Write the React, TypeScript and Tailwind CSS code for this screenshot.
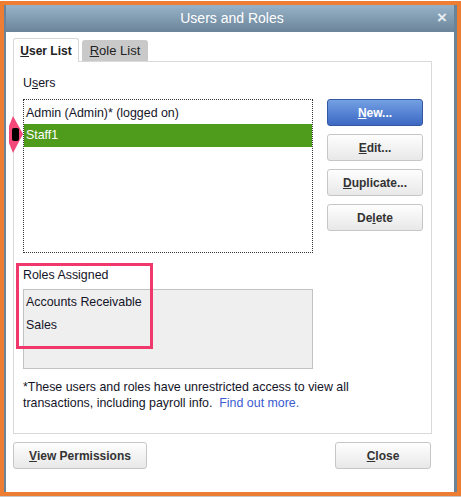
import React from 'react';

function Btn({ children, primary, className = '' }: { children: React.ReactNode; primary?: boolean; className?: string }) {
  const look = primary
    ? 'bg-gradient-to-b from-[#74a0e3] to-[#3d68c3] border-[#34589f] text-white'
    : 'bg-gradient-to-b from-[#fefefe] to-[#e8e8e8] border-[#c6c6c6] text-[#333]';
  return (
    <button className={`h-[27px] rounded-[3px] border font-bold text-[12px] flex items-center justify-center ${look} ${className}`}>
      {children}
    </button>
  );
}

export default function App() {
  return (
    <div className="relative w-[461px] h-[497px] bg-white pt-px text-[12.4px] text-[#141428]" style={{ fontFamily: '"Liberation Sans", Arial, sans-serif' }}>
      <div className="h-[495px] border-4 border-[#ec7d33] flex flex-col">
        <div className="flex-1 flex flex-col border-l-2 border-r-[3px] border-[#6b8398]">
          {/* title bar */}
          <div className="h-[27px] bg-gradient-to-b from-[#98b3c9] to-[#6b8499] flex items-center justify-center relative">
            <span className="text-white text-[14px] ml-[4px]">Users and Roles</span>
            <span className="absolute right-[7px] top-[4px] text-[#e6ecf1] text-[17px] font-bold leading-none">×</span>
          </div>

          {/* body */}
          <div className="flex-1 bg-white pl-[7px] pt-[6px] flex flex-col">
            {/* tabs */}
            <div className="flex items-end h-[24px] relative z-10">
              <div className="w-[66px] h-[24px] border border-b-0 border-[#d6d6d6] rounded-t-[3px] bg-white flex items-center justify-center font-bold text-[12px] text-[#222]">
                <span><span className="underline">U</span>ser List</span>
              </div>
              <div className="ml-[3px] w-[66px] h-[21px] bg-[#c9c9c9] rounded-t-[3px] flex items-center justify-center text-[13px] text-[#222] mb-px">
                <span><span className="underline">R</span>ole List</span>
              </div>
            </div>

            {/* panel */}
            <div className="-mt-px w-[419px] h-[373px] border border-[#d9d9d9] pl-[9px] pt-[13px] flex flex-col">
              <div className="h-[16px] leading-[16px]">U<span className="underline">s</span>ers</div>
              <div className="flex mt-[8px]">
                <div className="w-[290px] h-[154px] border border-dotted border-[#333] flex flex-col pt-[4px]">
                  <div className="h-[20px] leading-[18px] pl-[2px]">Admin (Admin)* (logged on)</div>
                  <div className="h-[23px] leading-[22px] bg-[#4f9b1b] text-white pl-[2px]">Staff1</div>
                </div>
                <div className="ml-[14px] flex flex-col gap-[8px]">
                  <Btn primary className="w-[96px]"><span><span className="underline">N</span>ew...</span></Btn>
                  <Btn className="w-[96px]"><span><span className="underline">E</span>dit...</span></Btn>
                  <Btn className="w-[96px]"><span><span className="underline">D</span>uplicate...</span></Btn>
                  <Btn className="w-[96px]"><span>De<span className="underline">l</span>ete</span></Btn>
                </div>
              </div>

              <div className="mt-[14px] h-[16px] leading-[16px]">Roles Assigned</div>
              <div className="mt-[6px] w-[290px] h-[80px] bg-[#efefef] border border-[#c2c2c2] pl-[2px] pt-[3px]">
                <div className="h-[23px] leading-[18px]">Accounts Receivable</div>
                <div className="leading-[18px]">Sales</div>
              </div>

              <div className="mt-[10px] leading-[16px]">
                *These users and roles have unrestricted access to view all<br />
                transactions, including payroll info.&nbsp; <span className="text-[#3a5bd0]">Find out more.</span>
              </div>
            </div>

            {/* bottom buttons */}
            <div className="flex justify-between w-[418px] mt-[8px]">
              <Btn className="w-[134px] text-[12.5px]"><span><span className="underline">V</span>iew Permissions</span></Btn>
              <Btn className="w-[96px] text-[12.5px]"><span><span className="underline">C</span>lose</span></Btn>
            </div>
          </div>
        </div>
      </div>
      <div className="h-px bg-[#c8c8c8]" />

      {/* annotations */}
      <div className="absolute left-[16px] top-[263px] w-[137px] h-[86px] border-[3px] border-[#f0386c]" />
      <svg className="absolute left-[8px] top-[116px]" width="16" height="38" viewBox="0 0 16 38">
        <polygon points="5,0 15,18 5,37 1,27 1,10" fill="#f4487a" />
        <rect x="4" y="12" width="7" height="13" rx="2" fill="#000" />
      </svg>
    </div>
  );
}
